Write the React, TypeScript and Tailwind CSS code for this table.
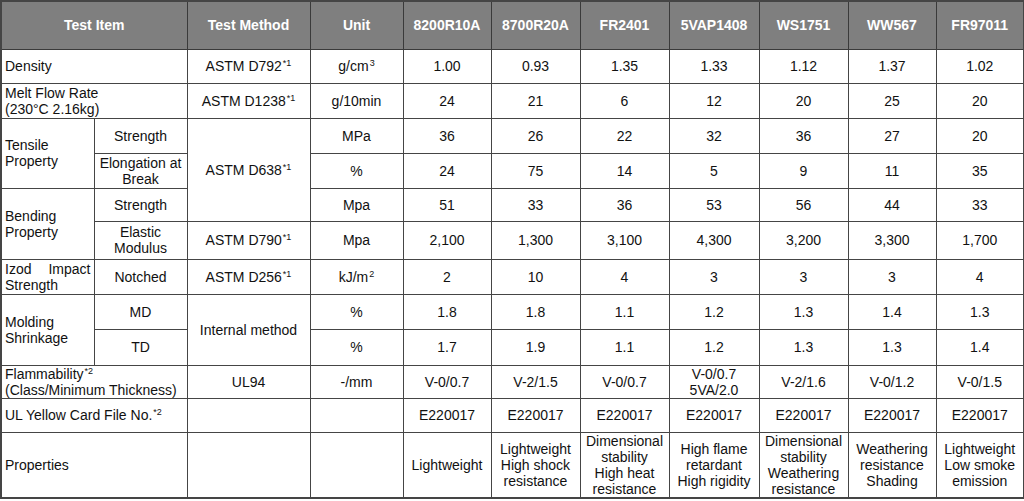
const products = ["8200R10A", "8700R20A", "FR2401", "5VAP1408", "WS1751", "WW567", "FR97011"];

const cell = "border border-[#454545] px-[3px] text-center align-middle";
const left = "border border-[#454545] px-[3px] text-left align-middle";

function Sup({ children }: { children: React.ReactNode }) {
  return <span className="text-[9px] leading-none relative -top-[5px] ml-[1px]">{children}</span>;
}

function Values({ vals }: { vals: React.ReactNode[] }) {
  return (
    <>
      {vals.map((v, i) => (
        <td key={i} className={cell}>
          {v}
        </td>
      ))}
    </>
  );
}

export default function App() {
  return (
    <div className="w-[1024px] h-[501px] bg-white overflow-hidden font-['Liberation_Sans',Arial,sans-serif] text-[14px] leading-[16px] text-[#111]">
      <table className="w-[1023px] table-fixed border-collapse border-2 border-[#454545]">
        <colgroup>
          <col className="w-[93px]" />
          <col className="w-[93px]" />
          <col className="w-[123px]" />
          <col className="w-[93px]" />
          <col className="w-[88px]" />
          <col className="w-[89px]" />
          <col className="w-[89px]" />
          <col className="w-[90px]" />
          <col className="w-[89px]" />
          <col className="w-[88px]" />
          <col className="w-[88px]" />
        </colgroup>
        <thead>
          <tr className="h-[48px] bg-[#7f7f7f] text-white font-bold">
            <th colSpan={2} className="border border-[#3a3a3a] text-center">Test Item</th>
            <th className="border border-[#3a3a3a] text-center">Test Method</th>
            <th className="border border-[#3a3a3a] text-center">Unit</th>
            {products.map((p) => (
              <th key={p} className="border border-[#3a3a3a] text-center">
                {p}
              </th>
            ))}
          </tr>
        </thead>
        <tbody>
          <tr className="h-[34px]">
            <td colSpan={2} className={left}>Density</td>
            <td className={cell}>ASTM D792<Sup>*1</Sup></td>
            <td className={cell}>g/cm<Sup>3</Sup></td>
            <Values vals={["1.00", "0.93", "1.35", "1.33", "1.12", "1.37", "1.02"]} />
          </tr>
          <tr className="h-[35px]">
            <td colSpan={2} className={left}>
              Melt Flow Rate
              <br />
              (230°C 2.16kg)
            </td>
            <td className={cell}>ASTM D1238<Sup>*1</Sup></td>
            <td className={cell}>g/10min</td>
            <Values vals={["24", "21", "6", "12", "20", "25", "20"]} />
          </tr>
          <tr className="h-[35px]">
            <td rowSpan={2} className={left}>
              Tensile
              <br />
              Property
            </td>
            <td className={cell}>Strength</td>
            <td rowSpan={3} className={cell}>ASTM D638<Sup>*1</Sup></td>
            <td className={cell}>MPa</td>
            <Values vals={["36", "26", "22", "32", "36", "27", "20"]} />
          </tr>
          <tr className="h-[35px]">
            <td className={cell}>
              Elongation at
              <br />
              Break
            </td>
            <td className={cell}>%</td>
            <Values vals={["24", "75", "14", "5", "9", "11", "35"]} />
          </tr>
          <tr className="h-[33px]">
            <td rowSpan={2} className={left}>
              Bending
              <br />
              Property
            </td>
            <td className={cell}>Strength</td>
            <td className={cell}>Mpa</td>
            <Values vals={["51", "33", "36", "53", "56", "44", "33"]} />
          </tr>
          <tr className="h-[38px]">
            <td className={cell}>
              Elastic
              <br />
              Modulus
            </td>
            <td className={cell}>ASTM D790<Sup>*1</Sup></td>
            <td className={cell}>Mpa</td>
            <Values vals={["2,100", "1,300", "3,100", "4,300", "3,200", "3,300", "1,700"]} />
          </tr>
          <tr className="h-[35px]">
            <td className="border border-[#454545] px-[3px] text-justify align-middle">Izod Impact Strength</td>
            <td className={cell}>Notched</td>
            <td className={cell}>ASTM D256<Sup>*1</Sup></td>
            <td className={cell}>kJ/m<Sup>2</Sup></td>
            <Values vals={["2", "10", "4", "3", "3", "3", "4"]} />
          </tr>
          <tr className="h-[35px]">
            <td rowSpan={2} className={left}>
              Molding
              <br />
              Shrinkage
            </td>
            <td className={cell}>MD</td>
            <td rowSpan={2} className={cell}>Internal method</td>
            <td className={cell}>%</td>
            <Values vals={["1.8", "1.8", "1.1", "1.2", "1.3", "1.4", "1.3"]} />
          </tr>
          <tr className="h-[36px]">
            <td className={cell}>TD</td>
            <td className={cell}>%</td>
            <Values vals={["1.7", "1.9", "1.1", "1.2", "1.3", "1.3", "1.4"]} />
          </tr>
          <tr className="h-[33px]">
            <td colSpan={2} className={left}>
              Flammability<Sup>*2</Sup>
              <br />
              (Class/Minimum Thickness)
            </td>
            <td className={cell}>UL94</td>
            <td className={cell}>-/mm</td>
            <Values
              vals={[
                "V-0/0.7",
                "V-2/1.5",
                "V-0/0.7",
                <>
                  V-0/0.7
                  <br />
                  5VA/2.0
                </>,
                "V-2/1.6",
                "V-0/1.2",
                "V-0/1.5",
              ]}
            />
          </tr>
          <tr className="h-[34px]">
            <td colSpan={2} className="border border-[#454545] px-[3px] text-left align-top pt-[8px]">
              UL Yellow Card File No.<Sup>*2</Sup>
            </td>
            <td className={cell}></td>
            <td className={cell}></td>
            <Values vals={Array(7).fill("E220017")} />
          </tr>
          <tr className="h-[64px]">
            <td colSpan={2} className={left}>Properties</td>
            <td className={cell}></td>
            <td className={cell}></td>
            <Values
              vals={[
                "Lightweight",
                <>Lightweight<br />High shock<br />resistance</>,
                <>Dimensional<br />stability<br />High heat<br />resistance</>,
                <>High flame<br />retardant<br />High rigidity</>,
                <>Dimensional<br />stability<br />Weathering<br />resistance</>,
                <>Weathering<br />resistance<br />Shading</>,
                <>Lightweight<br />Low smoke<br />emission</>,
              ]}
            />
          </tr>
        </tbody>
      </table>
    </div>
  );
}
